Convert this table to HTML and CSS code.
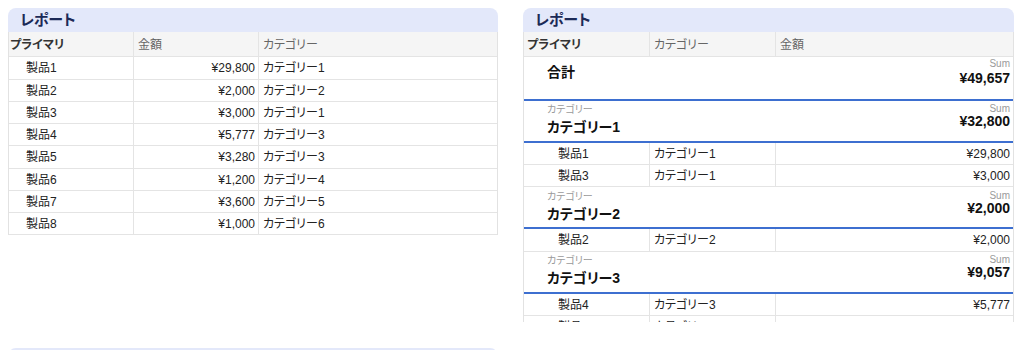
FILE: index.html
```html
<!DOCTYPE html>
<html lang="ja">
<head>
<meta charset="utf-8">
<title>レポート</title>
<link rel="stylesheet" href="styles.css">
</head>
<body>
<div class="page">
  <section class="panel">
    <div class="panel-title">レポート</div>
    <div class="panel-body">
      <div class="grid grid-left">
        <div class="row head"><span class="c primary">プライマリ</span><span class="c">金額</span><span class="c">カテゴリー</span></div>
        <div class="row"><span class="c item">製品1</span><span class="c num">¥29,800</span><span class="c cat">カテゴリー1</span></div>
        <div class="row"><span class="c item">製品2</span><span class="c num">¥2,000</span><span class="c cat">カテゴリー2</span></div>
        <div class="row"><span class="c item">製品3</span><span class="c num">¥3,000</span><span class="c cat">カテゴリー1</span></div>
        <div class="row"><span class="c item">製品4</span><span class="c num">¥5,777</span><span class="c cat">カテゴリー3</span></div>
        <div class="row"><span class="c item">製品5</span><span class="c num">¥3,280</span><span class="c cat">カテゴリー3</span></div>
        <div class="row"><span class="c item">製品6</span><span class="c num">¥1,200</span><span class="c cat">カテゴリー4</span></div>
        <div class="row"><span class="c item">製品7</span><span class="c num">¥3,600</span><span class="c cat">カテゴリー5</span></div>
        <div class="row"><span class="c item">製品8</span><span class="c num">¥1,000</span><span class="c cat">カテゴリー6</span></div>
      </div>
    </div>
  </section>

  <section class="panel">
    <div class="panel-title">レポート</div>
    <div class="panel-body">
      <div class="grid grid-right">
        <div class="row head"><span class="c primary">プライマリ</span><span class="c">カテゴリー</span><span class="c">金額</span></div>

        <div class="group total">
          <div class="g-left"><div class="g-name">合計</div></div>
          <div class="g-right"><div class="g-sum">Sum</div><div class="g-amount">¥49,657</div></div>
        </div>

        <div class="group">
          <div class="g-left"><div class="g-label">カテゴリー</div><div class="g-name">カテゴリー1</div></div>
          <div class="g-right"><div class="g-sum">Sum</div><div class="g-amount">¥32,800</div></div>
        </div>
        <div class="row"><span class="c item">製品1</span><span class="c cat">カテゴリー1</span><span class="c num">¥29,800</span></div>
        <div class="row"><span class="c item">製品3</span><span class="c cat">カテゴリー1</span><span class="c num">¥3,000</span></div>

        <div class="group">
          <div class="g-left"><div class="g-label">カテゴリー</div><div class="g-name">カテゴリー2</div></div>
          <div class="g-right"><div class="g-sum">Sum</div><div class="g-amount">¥2,000</div></div>
        </div>
        <div class="row"><span class="c item">製品2</span><span class="c cat">カテゴリー2</span><span class="c num">¥2,000</span></div>

        <div class="group">
          <div class="g-left"><div class="g-label">カテゴリー</div><div class="g-name">カテゴリー3</div></div>
          <div class="g-right"><div class="g-sum">Sum</div><div class="g-amount">¥9,057</div></div>
        </div>
        <div class="row"><span class="c item">製品4</span><span class="c cat">カテゴリー3</span><span class="c num">¥5,777</span></div>
        <div class="row"><span class="c item">製品5</span><span class="c cat">カテゴリー3</span><span class="c num">¥3,280</span></div>

        <div class="group">
          <div class="g-left"><div class="g-label">カテゴリー</div><div class="g-name">カテゴリー4</div></div>
          <div class="g-right"><div class="g-sum">Sum</div><div class="g-amount">¥1,200</div></div>
        </div>
        <div class="row"><span class="c item">製品6</span><span class="c cat">カテゴリー4</span><span class="c num">¥1,200</span></div>
      </div>
    </div>
  </section>

  <section class="panel">
    <div class="panel-title">レポート</div>
    <div class="panel-body"></div>
  </section>
</div>
</body>
</html>
```
FILE: styles.css
```css
html, body {
  margin: 0;
  background: #ffffff;
}

body {
  font-family: "Liberation Sans", "Noto Sans CJK JP", sans-serif;
  font-feature-settings: "palt";
  color: #222222;
  overflow: hidden;
}

.page {
  display: grid;
  grid-template-columns: 490px 491px;
  grid-auto-rows: 314px;
  column-gap: 25px;
  row-gap: 26px;
  padding: 8px;
}

.panel {
  display: flex;
  flex-direction: column;
  overflow: hidden;
}

.panel-title {
  flex: none;
  height: 24px;
  line-height: 24px;
  padding: 0 12px;
  background: #e3e8fa;
  border-radius: 8px 8px 0 0;
  font-size: 15px;
  font-weight: bold;
  color: #1c2a57;
}

.panel-body {
  flex: 1;
  overflow: hidden;
}

.grid {
  border-left: 1px solid #e2e2e2;
  border-right: 1px solid #e2e2e2;
}

.row {
  display: grid;
  box-sizing: border-box;
  height: 22.25px;
  border-bottom: 1px solid #e4e4e4;
  font-size: 12px;
  line-height: 21px;
  color: #222222;
}

.grid-left .row {
  grid-template-columns: 124px 125px 1fr;
}

.grid-right .row {
  grid-template-columns: 125px 126px 1fr;
}

.row .c {
  padding-top: 1px;
  white-space: nowrap;
  overflow: hidden;
}

.row .c + .c {
  border-left: 1px solid #e4e4e4;
}

.row.head {
  height: 25.3px;
  line-height: 24px;
  background: #f5f5f5;
  color: #666666;
}

.row.head .c {
  padding-top: 1px;
  padding-left: 4px;
}

.row.head .primary {
  padding-left: 1px;
  color: #333333;
  font-weight: bold;
}

.grid-right .row.head .primary {
  padding-left: 3px;
}

.grid-left .item {
  padding-left: 17px;
}

.grid-right .item {
  padding-left: 34px;
}

.row .num {
  text-align: right;
  padding-right: 3px;
}

.row .cat {
  padding-left: 4px;
}

.group {
  display: flex;
  justify-content: space-between;
  align-items: flex-start;
  box-sizing: border-box;
  height: 42px;
  padding: 0 3px 0 23px;
  border-bottom: 2px solid #3d6fd0;
}

.group.total {
  height: 43.5px;
}

.g-left {
  padding-top: 3.5px;
}

.g-label {
  font-size: 10px;
  line-height: 12px;
  color: #9a9a9a;
}

.g-name {
  font-size: 14px;
  line-height: 22px;
  font-weight: bold;
  color: #111111;
}

.total .g-left {
  padding-top: 4px;
}

.g-right {
  padding-top: 2.5px;
  text-align: right;
}

.total .g-right {
  padding-top: 1px;
}

.g-sum {
  font-size: 10px;
  line-height: 12px;
  color: #9a9a9a;
}

.g-amount {
  font-size: 14px;
  line-height: 13px;
  font-weight: bold;
  color: #111111;
}

.total .g-amount {
  line-height: 16px;
}
```
